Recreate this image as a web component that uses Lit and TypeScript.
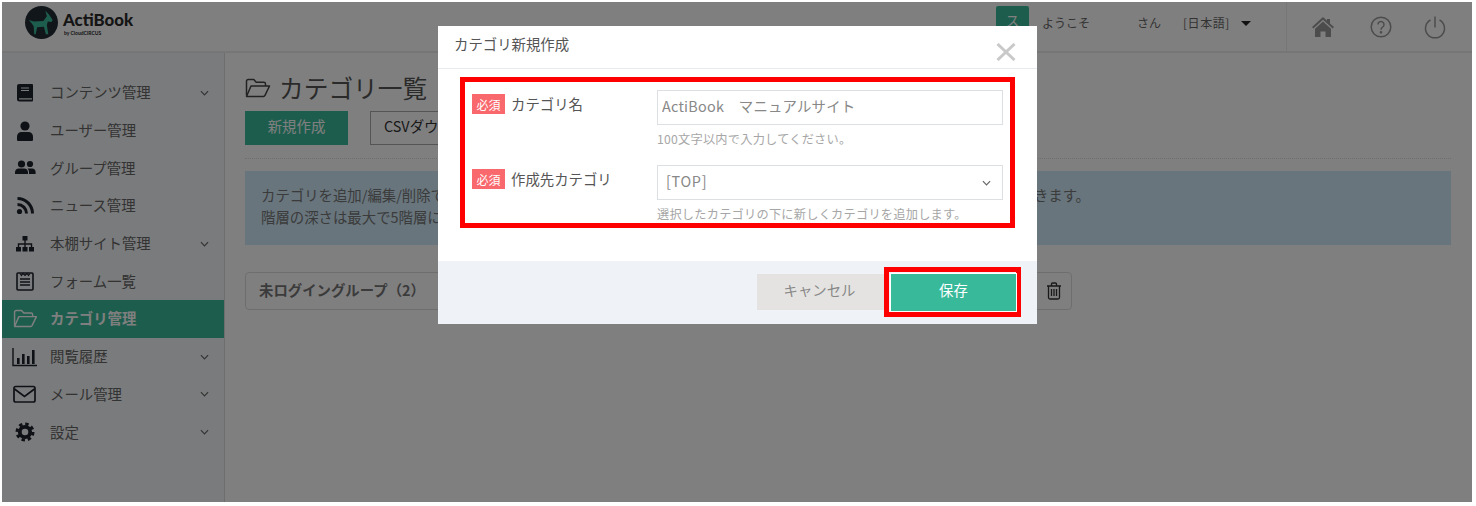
import { LitElement, html, css, svg } from "lit";
import { customElement } from "lit/decorators.js";

const chevron = html`<svg class="chev" viewBox="0 0 10 6" width="9" height="6"><path d="M1 1l4 4 4-4" fill="none" stroke="currentColor" stroke-width="1.3"/></svg>`;

const folder = (w: number, h: number, sw: number) => html`<svg viewBox="0 0 26 20" width=${w} height=${h} fill="none" stroke="currentColor" stroke-width=${sw} stroke-linejoin="round"><path d="M1.5 17.5V3.2A1.7 1.7 0 0 1 3.2 1.5h5.6l2.4 2.7h7.6a1.7 1.7 0 0 1 1.7 1.7V8"/><path d="M1.5 18.5L6 8h18.5L20 17.3a2 2 0 0 1-1.6 1.2z"/></svg>`;

const icons: Record<string, unknown> = {
  book: svg`<path d="M5 2h13a1 1 0 0 1 1 1v15.5a1 1 0 0 1-1 1H5.5A2.5 2.5 0 0 1 3 17V4a2 2 0 0 1 2-2z" fill="currentColor"/><path d="M7 6h8M7 8.5h8" stroke="#f4f6f8" stroke-width="1.2"/><path d="M5 16.3h13v1.2H5z" fill="#f4f6f8"/>`,
  user: svg`<circle cx="11" cy="6" r="4.6" fill="currentColor"/><path d="M3 20v-3.5A4.5 4.5 0 0 1 7.5 12h7a4.5 4.5 0 0 1 4.5 4.5V20a1 1 0 0 1-1 1H4a1 1 0 0 1-1-1z" fill="currentColor"/>`,
  users: svg`<g fill="currentColor"><circle cx="7.5" cy="7" r="3.6"/><circle cx="16" cy="7" r="3.1"/><path d="M1 17v-1.7A4 4 0 0 1 5 11.5h5a4 4 0 0 1 4 3.8V17z"/><path d="M15 17v-2.2a4 4 0 0 0-1.5-3.1c.5-.2 1-.3 1.5-.3h3a3.6 3.6 0 0 1 3.6 3.5V17z"/></g>`,
  rss: svg`<g fill="none" stroke="currentColor" stroke-width="3"><path d="M3.5 9.5a9 9 0 0 1 9 9"/><path d="M3.5 3.5a15 15 0 0 1 15 15"/></g><circle cx="5.5" cy="16.5" r="2.6" fill="currentColor"/>`,
  sitemap: svg`<g fill="currentColor"><rect x="8.5" y="3" width="5" height="4.5"/><rect x="2" y="14" width="5" height="4.5"/><rect x="8.5" y="14" width="5" height="4.5"/><rect x="15" y="14" width="5" height="4.5"/></g><path d="M11 7v7M4.5 14v-3h13v3" fill="none" stroke="currentColor" stroke-width="1.4"/>`,
  form: svg`<rect x="3" y="3" width="16" height="17" rx="1" fill="none" stroke="currentColor" stroke-width="1.6"/><path d="M6 3.5l1.5 2 1.5-2 2 2 2-2 1.5 2 1.5-2" fill="none" stroke="currentColor" stroke-width="1.2"/><path d="M6 9h10M6 12h10M6 15h10" stroke="currentColor" stroke-width="1.3"/>`,
  chart: svg`<path d="M1 2v17.5h24" fill="none" stroke="currentColor" stroke-width="1.4"/><g fill="currentColor"><rect x="5" y="12" width="2.6" height="6"/><rect x="10" y="8" width="2.6" height="10"/><rect x="15" y="10" width="2.6" height="8"/><rect x="20" y="4" width="2.6" height="14"/></g>`,
  mail: svg`<rect x="2" y="3.5" width="21" height="15.5" rx="1.8" fill="none" stroke="currentColor" stroke-width="1.7"/><path d="M2.5 6l10 7.5L22.5 6" fill="none" stroke="currentColor" stroke-width="1.7"/>`,
  gear: svg`<circle cx="11" cy="11" r="5.2" fill="none" stroke="currentColor" stroke-width="3.8"/><circle cx="11" cy="11" r="8" fill="none" stroke="currentColor" stroke-width="3" stroke-dasharray="3.4 2.88"/>`,
};

const navItems = [
  { icon: "book", label: "コンテンツ管理", more: true },
  { icon: "user", label: "ユーザー管理" },
  { icon: "users", label: "グループ管理" },
  { icon: "rss", label: "ニュース管理" },
  { icon: "sitemap", label: "本棚サイト管理", more: true },
  { icon: "form", label: "フォーム一覧" },
  { icon: "folder", label: "カテゴリ管理", active: true },
  { icon: "chart", label: "閲覧履歴", more: true },
  { icon: "mail", label: "メール管理", more: true },
  { icon: "gear", label: "設定", more: true },
];

@customElement("app-root")
export class AppRoot extends LitElement {
  static styles = css`
    :host {
      display: block;
      position: relative;
      width: 1476px;
      height: 506px;
      overflow: hidden;
      background: #fff;
      font-family: "Noto Sans CJK JP", "Liberation Sans", sans-serif;
      font-size: 14.4px;
      color: #555;
    }
    * { box-sizing: border-box; }
    .page {
      position: relative;
      margin: 2px 4px 0 2px;
      height: 500px;
      background: #fff;
      display: grid;
      grid-template-rows: 51px 1fr;
      grid-template-columns: 222px 1fr;
    }
    .dim {
      position: absolute;
      inset: 0;
      background: rgba(0, 0, 0, 0.5);
    }
    header {
      grid-column: 1 / 3;
      display: flex;
      align-items: flex-start;
      border-bottom: 2px solid #ececec;
      background: #fff;
    }
    .logo { display: flex; margin: 4px 0 0 23px; gap: 5px; }
    .logo-text { display: flex; flex-direction: column; font-family: "Lato", sans-serif; color: #2a2a2a; }
    .logo-name { font-size: 16.8px; font-weight: 900; line-height: 20px; margin-top: 4px; }
    .logo-by { font-size: 5px; line-height: 6px; margin-left: 1px; font-weight: 700; }
    .user { margin-left: auto; display: flex; align-items: flex-start; font-size: 12px; color: #666; white-space: nowrap; }
    .avatar { width: 33px; height: 30px; margin-top: 4px; background: #3abb9a; color: #fff; border-radius: 2px; text-align: center; font-size: 14px; line-height: 28px; }
    .welcome { margin: 12px 0 0 13px; line-height: 18px; width: 48px; }
    .san { margin: 12px 0 0 47px; line-height: 18px; width: 29px; }
    .lang { margin: 12px 0 0 17px; line-height: 18px; display: flex; align-items: center; gap: 11px; letter-spacing: 0.6px; color: #666; }
    .caret { width: 0; height: 0; border: 5.5px solid transparent; border-top: 5.5px solid #222; border-bottom: 0; }
    .tools { display: flex; align-items: center; height: 49px; width: 186px; margin-left: 35px; border-left: 1px solid #eee; color: #999; padding-left: 24px; }
    .tools svg { display: block; flex: none; }
    .tools svg + svg { margin-left: 32px; }
    .tools svg:first-child + svg { margin-left: 35px; }
    aside { background: #f4f6f8; padding-top: 21px; }
    .nav { display: flex; align-items: center; height: 37.7px; color: #666; }
    .nav-icon { width: 46px; display: flex; justify-content: center; color: #1d222c; }
    .nav-label { margin-left: 2px; padding-bottom: 2px; flex: 1; }
    .nav .chev { margin-right: 15px; color: #666; }
    .nav.active { background: #3abb9a; color: #fff; font-weight: 700; }
    .nav.active .nav-icon { color: #fff; }
    main { padding: 16px 21px 0 20px; background: #fff; border-left: 1px solid #ddd; }
    h1 { margin: 0; display: flex; align-items: center; gap: 8px; height: 40px; padding-bottom: 4px; font-size: 24.7px; font-weight: 400; color: #555; }
    h1 svg { color: #444; margin-top: 2px; }
    .actions { display: flex; gap: 22px; height: 34px; margin-top: 2px; }
    .btn-new { width: 103px; background: #3abb9a; color: #fff; display: flex; align-items: center; justify-content: center; font-size: 14.4px; padding-bottom: 5px; }
    .btn-csv { width: 180px; border: 1px solid #aaa; padding: 0 0 5px 13px; display: flex; align-items: center; color: #333; }
    hr { border: 0; border-top: 1px dotted #ddd; margin: 13px 0 12px; }
    .info { height: 74px; background: #d0eafa; padding: 13px 16px; line-height: 22px; color: #777; }
    .info-line { display: flex; justify-content: space-between; width: 829px; }
    .group { display: flex; align-items: center; justify-content: space-between; width: 827px; height: 38px; margin-top: 27px; border: 1px solid #ddd; border-radius: 4px; padding: 0 9px 0 13px; font-weight: 700; color: #777; background: #fff; }
    .group span { padding-bottom: 3px; }
    .group svg { color: #333; display: block; }
    .modal { position: absolute; left: 438px; top: 26px; width: 599px; height: 298px; background: #fff; display: flex; flex-direction: column; }
    .modal-head { height: 43px; flex: none; display: flex; align-items: flex-start; justify-content: space-between; padding: 7px 21px 0 16px; border-bottom: 1px solid #e9ecef; line-height: 22px; color: #555; }
    .close { margin-top: 10px; display: block; color: #c9c9c9; }
    .modal-body { flex: 1; padding: 8px 22px 0; }
    .red { border: 5px solid #fe0000; height: 151px; padding: 8px 7px 0; display: grid; grid-template-columns: 185px 1fr; row-gap: 17px; align-content: start; }
    .lab { display: flex; align-items: center; gap: 6px; height: 20px; margin-top: 4px; color: #555; }
    .lab span:last-child { padding-bottom: 1px; }
    .badge { width: 33px; height: 20px; background: #f9686d; color: #fff; font-size: 12px; display: flex; align-items: center; justify-content: center; }
    .control { height: 35px; border: 1px solid #dde0e3; display: flex; align-items: center; justify-content: space-between; color: #888; background: #fff; font: inherit; letter-spacing: 0.25px; width: 100%; padding: 0 4px 5px; outline: none; }
    .control.sel { padding: 0 11px 0 8px; }
    .control.sel span { padding-bottom: 5px; letter-spacing: 0.7px; }
    .control .chev { color: #666; }
    .help { margin-top: 6px; line-height: 17px; font-size: 12.2px; letter-spacing: 0.25px; color: #a6a6a6; }
    .modal-foot { height: 63px; flex: none; background: #eff2f7; display: flex; justify-content: flex-end; align-items: flex-start; padding: 6px 16px 0 0; }
    .cancel { width: 127px; height: 36px; margin-top: 7px; background: #e4e3e1; color: #888; display: flex; align-items: center; justify-content: center; padding: 0 2px 5px 0; }
    .save-wrap { width: 137px; height: 50px; border: 5px solid #fe0000; padding: 2px 0 1px 2px; }
    .save { height: 100%; background: #38b99a; outline: 1px solid #fff; color: #fff; font-size: 14.4px; display: flex; align-items: center; justify-content: center; padding-bottom: 6px; }
  `;

  private renderNavIcon(name: string) {
    if (name === "folder") return folder(25, 19, 1.5);
    const wide = name === "chart" || name === "mail";
    return html`<svg viewBox=${wide ? "0 0 26 22" : "0 0 22 22"} width=${wide ? 26 : 22} height="22">${icons[name]}</svg>`;
  }

  render() {
    return html`
      <div class="page">
        <header>
          <div class="logo">
            <svg width="33" height="33" viewBox="0 0 34 34">
              <circle cx="17" cy="17" r="17" fill="#232c36"/>
              <path d="M4 14.5l5 1.5 10-.5 3.5-5L21 5l3.5 3.5 3 4.5 1 2-1.5 1.5-3.5-.5-1 3.5 1.5 9.5h-2.5l-2-7.500-7 .5-1.500 7H9.500L9 21l-2-3z" fill="#3abb9a"/>
            </svg>
            <div class="logo-text">
              <span class="logo-name">ActiBook</span>
              <span class="logo-by">by CloudCIRCUS</span>
            </div>
          </div>
          <div class="user">
            <div class="avatar">ス</div>
            <span class="welcome">ようこそ</span>
            <span class="san">さん</span>
            <span class="lang">[日本語]<i class="caret"></i></span>
            <div class="tools">
              <svg width="24" height="22" viewBox="0 0 24 22" fill="currentColor"><path d="M12 1L1 11l1.3 1.4L12 3.700l9.700 8.700L23 11l-4-3.600V3h-3v1.700z"/><path d="M12 5.500l-8 7.200V21h5.500v-5.500h5V21H20v-8.300z"/></svg>
              <svg width="22" height="22" viewBox="0 0 22 22" fill="none" stroke="currentColor" stroke-width="1.5"><circle cx="11" cy="11" r="9.8"/><path d="M8 8.500a3 3 0 1 1 4.700 2.500c-1 .7-1.700 1.200-1.700 2.700"/><circle cx="11" cy="16.3" r=".6" fill="currentColor"/></svg>
              <svg width="22" height="24" viewBox="0 0 22 24" fill="none" stroke="currentColor" stroke-width="1.5"><path d="M11 1.500v11"/><path d="M6.500 5A9.500 9.500 0 1 0 15.500 5"/></svg>
            </div>
          </div>
        </header>
        <aside>
          ${navItems.map(
            (n) => html`<div class="nav ${n.active ? "active" : ""}">
              <span class="nav-icon">${this.renderNavIcon(n.icon)}</span>
              <span class="nav-label">${n.label}</span>
              ${n.more ? chevron : ""}
            </div>`
          )}
        </aside>
        <main>
          <h1>${folder(26, 20, 1.5)}<span>カテゴリ一覧</span></h1>
          <div class="actions">
            <div class="btn-new">新規作成</div>
            <div class="btn-csv">CSVダウンロード</div>
          </div>
          <hr />
          <div class="info">
            <div class="info-line"><span>カテゴリを追加/編集/削除で</span><span>きます。</span></div>
            <div class="info-line"><span>階層の深さは最大で5階層に</span></div>
          </div>
          <div class="group">
            <span>未ログイングループ（2）</span>
            <svg width="16" height="18" viewBox="0 0 16 18" fill="none" stroke="currentColor" stroke-width="1.3"><path d="M1 4h14M5.500 4V2a1 1 0 0 1 1-1h3a1 1 0 0 1 1 1v2M2.500 4v11.500a1.500 1.500 0 0 0 1.500 1.500h8a1.500 1.500 0 0 0 1.500-1.500V4M5.500 7v7M8 7v7M10.500 7v7"/></svg>
          </div>
        </main>
        <div class="dim"></div>
      </div>
      <div class="modal">
        <div class="modal-head">
          <span>カテゴリ新規作成</span>
          <svg class="close" width="20" height="18" viewBox="0 0 20 18" fill="none" stroke="currentColor" stroke-width="3"><path d="M1.500 1L18.500 17M18.500 1L1.500 17"/></svg>
        </div>
        <div class="modal-body">
          <div class="red">
            <div class="lab"><span class="badge">必須</span><span>カテゴリ名</span></div>
            <div>
              <input class="control" .value=${"ActiBook　マニュアルサイト"} />
              <div class="help">100文字以内で入力してください。</div>
            </div>
            <div class="lab"><span class="badge">必須</span><span>作成先カテゴリ</span></div>
            <div>
              <div class="control sel"><span>[TOP]</span>${chevron}</div>
              <div class="help">選択したカテゴリの下に新しくカテゴリを追加します。</div>
            </div>
          </div>
        </div>
        <div class="modal-foot">
          <div class="cancel">キャンセル</div>
          <div class="save-wrap"><div class="save">保存</div></div>
        </div>
      </div>
    `;
  }
}
